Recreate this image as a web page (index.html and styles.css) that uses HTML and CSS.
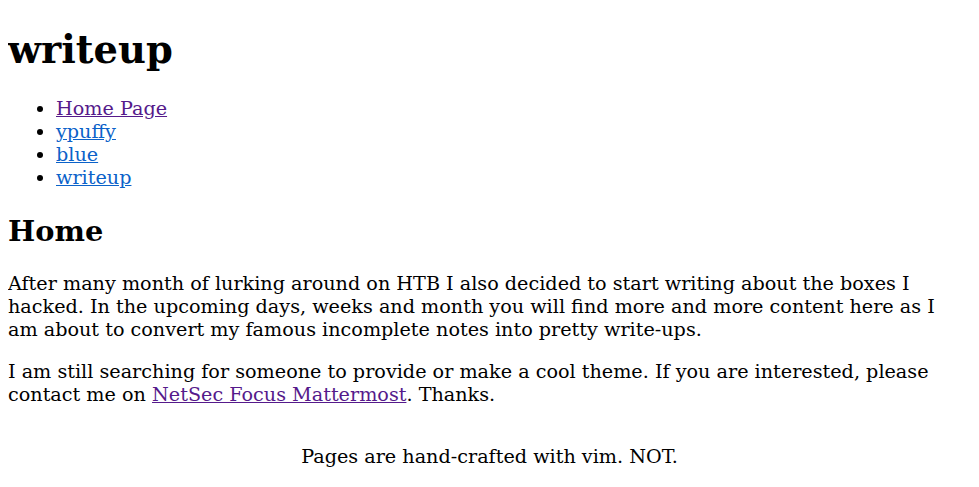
FILE: index.html
```html
<!DOCTYPE html>
<html>
<head>
<meta charset="utf-8">
<title>writeup</title>
<link rel="stylesheet" href="styles.css">
</head>
<body>
<h1 class="title">writeup</h1>
<ul class="nav">
<li><a class="visited" href="#home">Home Page</a></li>
<li><a href="#ypuffy">ypuffy</a></li>
<li><a href="#blue">blue</a></li>
<li><a href="#writeup">writeup</a></li>
</ul>
<h2 class="section">Home</h2>
<p class="intro">After many month of lurking around on HTB I also decided to start writing about the boxes I hacked. In the upcoming days, weeks and month you will find more and more content here as I am about to convert my famous incomplete notes into pretty write-ups.</p>
<p class="intro">I am still searching for someone to provide or make a cool theme. If you are interested, please contact me on <a class="visited" href="#mm">NetSec Focus Mattermost</a>. Thanks.</p>
<footer class="footer"><p>Pages are hand-crafted with vim. NOT.</p></footer>
</body>
</html>
```
FILE: styles.css
```css
html {
  font-size: 19.2px;
}
body {
  font-family: "DejaVu Serif", serif;
  font-size: 1rem;
  margin: 8px;
  color: #000;
  background: #fff;
}
a {
  color: #0b62c9;
}
a.visited {
  color: #551a8b;
}
.title {
  margin-top: 18.7px;
}
.nav {
  padding-left: 48px;
}
.section {
  margin-top: 25px;
}
.intro {
  margin-right: 4px;
}
.footer {
  text-align: center;
  margin-top: 39px;
}
```
